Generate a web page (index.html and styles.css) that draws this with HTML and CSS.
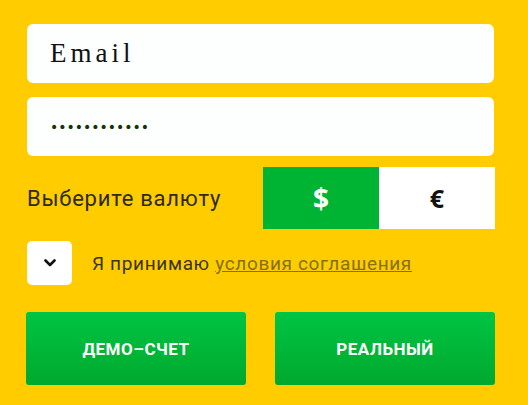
FILE: index.html
```html
<!DOCTYPE html>
<html lang="ru">
<head>
    <meta charset="UTF-8">
    <meta name="viewport" content="width=device-width, initial-scale=1.0">
    <title>Регистрация</title>
    <link rel="stylesheet" href="styles.css">
</head>
<body>
    <div class="form">
        <input class="field" type="text" placeholder="Email">
        <input class="field pass" type="password" value="123456789012">
        <div class="currency">
            <span class="label">Выберите валюту</span>
            <div class="toggle">
                <button class="cur active">$</button>
                <button class="cur">€</button>
            </div>
        </div>
        <label class="agree">
            <span class="check">
                <svg width="12" height="8" viewBox="0 0 12 8"><path d="M1.5 1.5 L6 6 L10.5 1.5" fill="none" stroke="#111" stroke-width="2.6" stroke-linecap="round" stroke-linejoin="round"/></svg>
            </span>
            <span class="agree-text">Я принимаю <a href="#">условия соглашения</a></span>
        </label>
        <div class="actions">
            <button class="btn">ДЕМО–СЧЕТ</button>
            <button class="btn">РЕАЛЬНЫЙ</button>
        </div>
    </div>
</body>
</html>
```
FILE: styles.css
```css
body {
    margin: 0;
    background: #ffcc00;
    font-family: Roboto, "Liberation Sans", sans-serif;
}
.form {
    width: 467px;
    padding: 24px 0 0 27px;
    display: flex;
    flex-direction: column;
}
.field {
    height: 59px;
    box-sizing: border-box;
    border: none;
    border-radius: 6px;
    background: #fdfefe;
    padding: 0 0 0 23px;
    font-family: "Liberation Serif", serif;
    font-size: 27px;
    letter-spacing: 4px;
    color: #111;
    outline: none;
}
.field::placeholder {
    color: #111;
    opacity: 1;
}
.pass {
    margin-top: 14px;
    font-family: "DejaVu Sans", sans-serif;
    font-size: 14px;
    letter-spacing: 0;
    color: #143300;
}
.currency {
    margin-top: 11px;
    height: 62px;
    display: flex;
    align-items: center;
    justify-content: space-between;
}
.label {
    font-size: 22px;
    letter-spacing: 0.75px;
    color: #2e2a0e;
}
.toggle {
    display: flex;
    height: 62px;
    margin-right: -1px;
}
.cur {
    width: 116px;
    height: 62px;
    border: none;
    background: #fff;
    font-family: "Open Sans", sans-serif;
    font-size: 25px;
    font-weight: bold;
    color: #111;
    cursor: pointer;
}
.cur.active {
    background: #00b433;
    color: #fff;
    font-size: 28px;
}
.agree {
    margin-top: 12px;
    display: flex;
    align-items: center;
    height: 44px;
}
.check {
    width: 45px;
    height: 44px;
    background: #fff;
    border-radius: 5px;
    display: flex;
    align-items: center;
    justify-content: center;
}
.agree-text {
    margin-left: 20px;
    font-size: 19px;
    letter-spacing: 0.65px;
    color: #3a3410;
}
.agree-text a {
    color: #85700a;
}
.actions {
    margin-top: 27px;
    display: flex;
    justify-content: space-between;
    margin-left: -1px;
    margin-right: -1px;
}
.btn {
    width: 220px;
    height: 73px;
    border: none;
    border-radius: 3px;
    background: linear-gradient(#00c443, #00a92d);
    color: #fff;
    font-family: Roboto, sans-serif;
    font-size: 17px;
    font-weight: bold;
    letter-spacing: 0.5px;
    cursor: pointer;
}
```
